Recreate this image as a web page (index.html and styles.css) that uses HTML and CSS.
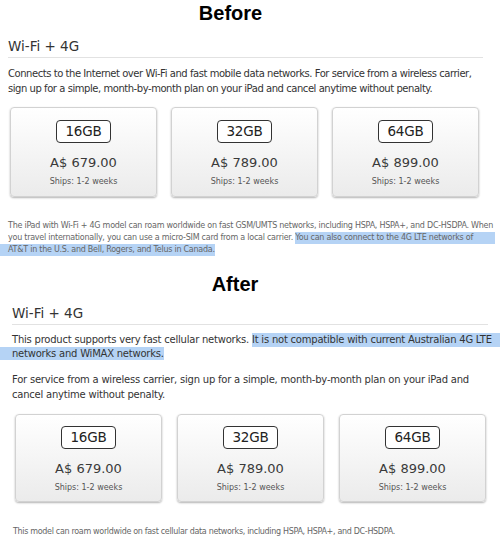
FILE: index.html
```html
<!DOCTYPE html>
<html lang="en">
<head>
  <meta charset="UTF-8">
  <meta name="viewport" content="width=device-width, initial-scale=1.0">
  <title>iPad Wi-Fi + 4G: Before and After</title>
  <link rel="stylesheet" href="styles.css">
</head>
<body>
  <section class="panel before">
    <h1 class="title">Before</h1>
    <h2 class="model">Wi-Fi + 4G</h2>
    <p class="intro">
      <span class="line">Connects to the Internet over Wi-Fi and fast mobile data networks. For service from a wireless carrier,</span>
      <span class="line">sign up for a simple, month-by-month plan on your iPad and cancel anytime without penalty.</span>
    </p>

    <div class="cards">
      <div class="card">
        <span class="size">16GB</span>
        <div class="price">A$ 679.00</div>
        <div class="ships">Ships: 1-2 weeks</div>
      </div>
      <div class="card">
        <span class="size">32GB</span>
        <div class="price">A$ 789.00</div>
        <div class="ships">Ships: 1-2 weeks</div>
      </div>
      <div class="card">
        <span class="size">64GB</span>
        <div class="price">A$ 899.00</div>
        <div class="ships">Ships: 1-2 weeks</div>
      </div>
    </div>

    <p class="note">
      <span class="line">The iPad with Wi-Fi + 4G model can roam worldwide on fast GSM/UMTS networks, including HSPA, HSPA+, and DC-HSDPA. When</span>
      <span class="line">you travel internationally, you can use a micro-SIM card from a local carrier.&nbsp;<span class="sel sel-end">You can also connect to the 4G LTE networks of</span></span>
      <span class="line"><span class="sel sel-start">AT&amp;T in the U.S. and Bell, Rogers, and Telus in Canada.</span></span>
    </p>
  </section>

  <section class="panel after">
    <h1 class="title">After</h1>
    <h2 class="model">Wi-Fi + 4G</h2>
    <p class="intro">
      <span class="line">This product supports very fast cellular networks.&nbsp;<span class="sel sel-end">It is not compatible with current Australian 4G LTE</span></span>
      <span class="line"><span class="sel sel-start">networks and WiMAX networks.</span></span>
    </p>
    <p class="intro second">
      <span class="line">For service from a wireless carrier, sign up for a simple, month-by-month plan on your iPad and</span>
      <span class="line">cancel anytime without penalty.</span>
    </p>

    <div class="cards">
      <div class="card">
        <span class="size">16GB</span>
        <div class="price">A$ 679.00</div>
        <div class="ships">Ships: 1-2 weeks</div>
      </div>
      <div class="card">
        <span class="size">32GB</span>
        <div class="price">A$ 789.00</div>
        <div class="ships">Ships: 1-2 weeks</div>
      </div>
      <div class="card">
        <span class="size">64GB</span>
        <div class="price">A$ 899.00</div>
        <div class="ships">Ships: 1-2 weeks</div>
      </div>
    </div>

    <p class="note">
      <span class="line">This model can roam worldwide on fast cellular data networks, including HSPA, HSPA+, and DC-HSDPA.</span>
    </p>
  </section>
</body>
</html>
```

FILE: styles.css
```css
body {
  margin: 0;
  padding: 0;
  background: #fff;
  color: #333;
  font-family: "DejaVu Sans", "Lucida Grande", sans-serif;
}
.panel {
  padding: 0 17px 0 8px;
}
.after {
  padding: 0 12px 0 12px;
}
.title {
  margin: 0;
  padding: 1px 30px 0 0;
  font-family: "Liberation Sans", Arial, sans-serif;
  font-size: 20px;
  line-height: 24px;
  font-weight: bold;
  color: #000;
  text-align: center;
}
.after .title {
  margin-top: 16px;
  padding-top: 0;
}
.model {
  margin: 13px 0 0;
  padding-bottom: 3px;
  border-bottom: 1px solid #e2e2e2;
  font-size: 13.5px;
  line-height: 16px;
  font-weight: normal;
  color: #333;
}
.after .model {
  margin-top: 9px;
}
.line {
  display: flex;
  white-space: nowrap;
}
.intro {
  margin: 8px 0 0;
  font-size: 10px;
  letter-spacing: -0.45px;
  line-height: 15px;
  color: #333;
}
.after .intro {
  letter-spacing: -0.22px;
  line-height: 13.5px;
}
.after .intro.second {
  margin-top: 12px;
  line-height: 15px;
}
.sel {
  background: #b5d3f5;
}
.sel-end {
  flex: 1;
  margin-right: -12px;
}
.before .sel-start {
  margin-left: -8px;
  padding-left: 8px;
}
.after .sel-start {
  margin-left: -12px;
  padding-left: 12px;
}
.cards {
  display: flex;
  gap: 14px;
  margin: 11px 0 0 2px;
}
.after .cards {
  gap: 15px;
  margin: 12px 0 0 3px;
}
.card {
  width: 147px;
  height: 90px;
  box-sizing: border-box;
  padding-top: 12px;
  border: 1px solid #d2d2d2;
  border-radius: 4px;
  background: linear-gradient(#fff, #ebebeb);
  box-shadow: 0 1px 2px rgba(0, 0, 0, 0.3);
  text-align: center;
}
.after .card {
  height: 88px;
  padding-top: 11px;
}
.size {
  display: inline-block;
  height: 23px;
  box-sizing: border-box;
  padding: 0 8px;
  border: 1.5px solid #333;
  border-radius: 4px;
  background: #fff;
  font-size: 13.5px;
  line-height: 20px;
  letter-spacing: -0.2px;
  color: #222;
}
.price {
  margin-top: 11px;
  font-size: 13px;
  line-height: 18px;
  color: #3a3a3a;
}
.ships {
  margin-top: 4px;
  font-size: 8px;
  line-height: 11px;
  color: #555;
}
.note {
  margin: 23px 0 0;
  font-size: 8px;
  letter-spacing: -0.25px;
  line-height: 12px;
  color: #666;
}
.after .note {
  margin-top: 24px;
  padding-left: 1px;
  letter-spacing: -0.32px;
}
```
